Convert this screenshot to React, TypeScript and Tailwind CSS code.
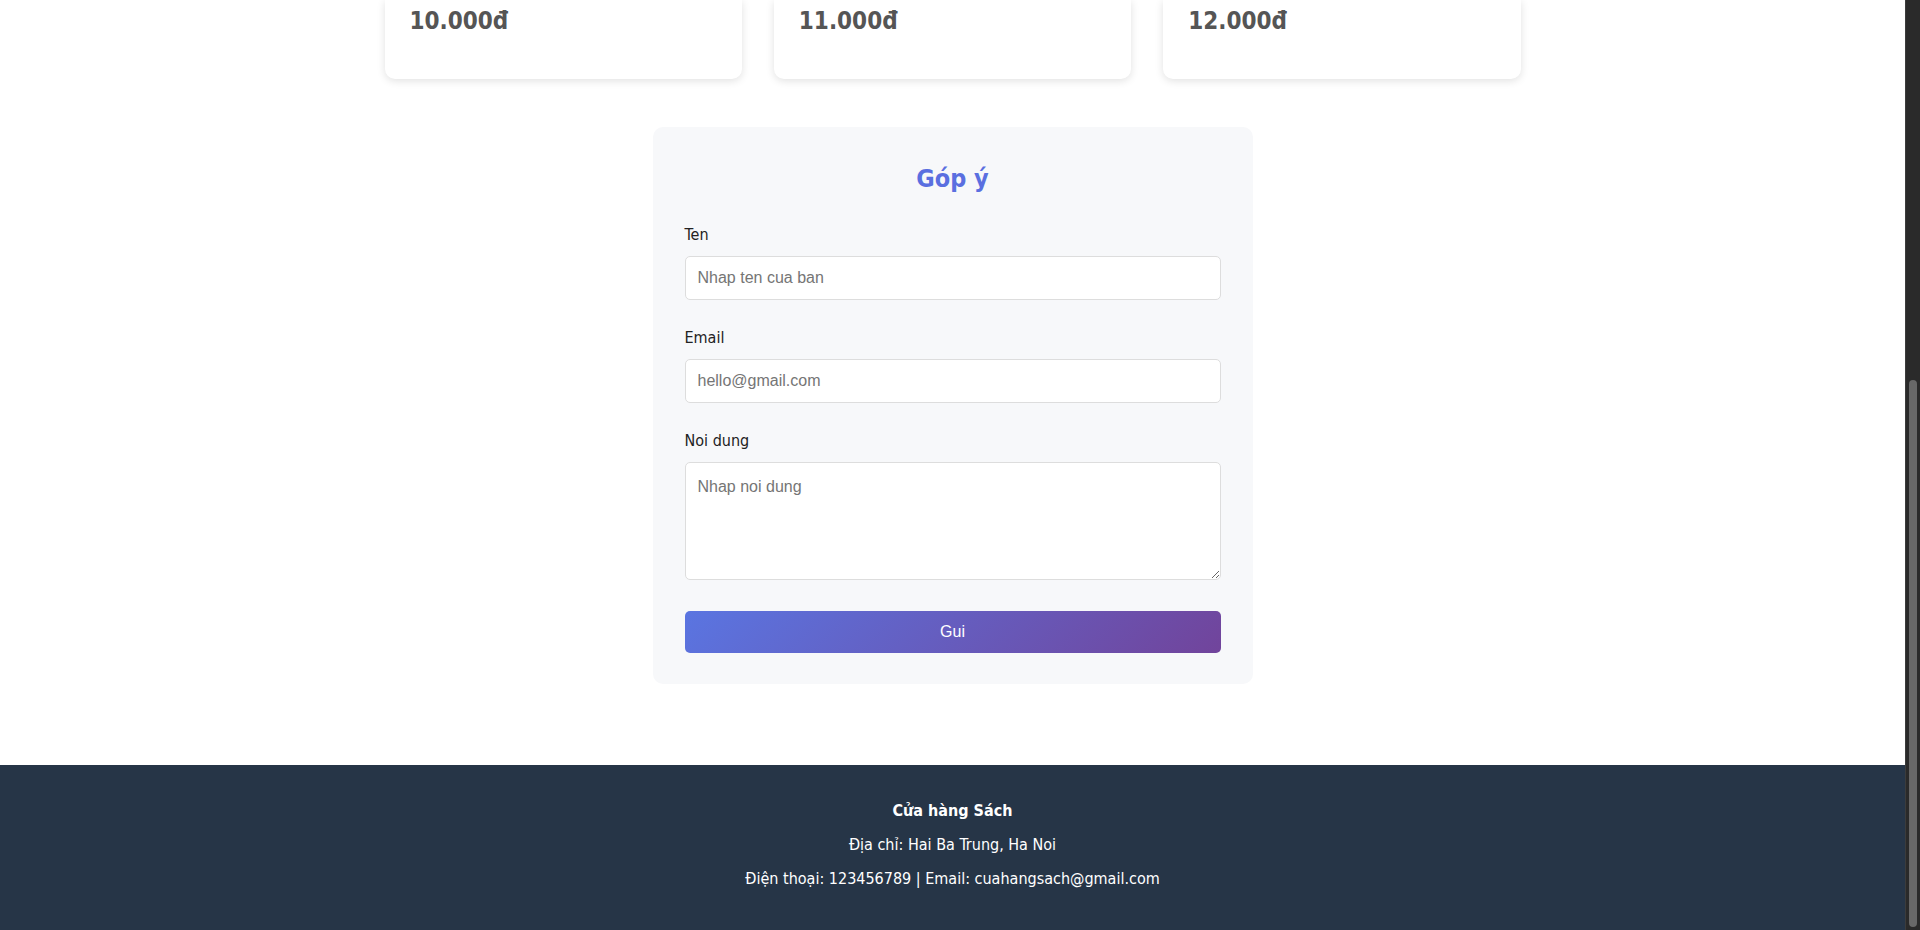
import React from 'react';

const prices = ['10.000đ', '11.000đ', '12.000đ'];

const PriceCard: React.FC<{ price: string }> = ({ price }) => (
    <div className="bg-white rounded-b-[10px] shadow-[0_2px_8px_rgba(0,0,0,0.12)] pt-[7px] pb-[44px] px-[25px]">
        <p className="text-[24px] leading-[28px] font-bold text-[#555555]">{price}</p>
    </div>
);

const FeedbackForm: React.FC = () => {
    const inputCls =
        "block w-full h-[44px] px-3 border border-[#dddddd] rounded-[5px] bg-white text-[16px] text-[#333] placeholder:text-[#757575] outline-none font-['Liberation_Sans',Arial,sans-serif]";
    const labelCls = 'block text-[16px] leading-[20px] text-[#222] mb-[11px]';

    return (
        <section className="w-[600px] mx-auto mt-[48px] mb-[81px] bg-[#f7f8fa] rounded-[10px] px-8 pt-8 pb-[31px]">
            <h2 className="text-center text-[25px] leading-[40px] font-bold text-[#5a6fe0] mb-[26px]">Góp ý</h2>

            <form onSubmit={(e) => e.preventDefault()}>
                <div>
                    <label className={labelCls}>Ten</label>
                    <input type="text" placeholder="Nhap ten cua ban" className={inputCls} />
                </div>

                <div className="mt-[28px]">
                    <label className={labelCls}>Email</label>
                    <input type="email" placeholder="hello@gmail.com" className={inputCls} />
                </div>

                <div className="mt-[28px]">
                    <label className={labelCls}>Noi dung</label>
                    <textarea
                        rows={5}
                        placeholder="Nhap noi dung"
                        className="block w-full h-[118px] p-3 border border-[#dddddd] rounded-[5px] bg-white text-[16px] text-[#333] placeholder:text-[#757575] outline-none font-['Liberation_Sans',Arial,sans-serif]"
                    />
                </div>

                <button
                    type="submit"
                    className="mt-[31px] block w-full h-[42px] rounded-[5px] text-white text-[16px] bg-[linear-gradient(135deg,#5a75e1_0%,#71449b_100%)] font-['Liberation_Sans',Arial,sans-serif]"
                >
                    Gui
                </button>
            </form>
        </section>
    );
};

const Footer: React.FC = () => (
    <footer className="flex-1 bg-[#263547] text-white text-center text-[16px] leading-[20px] pt-[36px] flex flex-col gap-[14px]">
        <p className="font-bold">Cửa hàng Sách</p>
        <p>Địa chỉ: Hai Ba Trung, Ha Noi</p>
        <p>Điện thoại: 123456789 | Email: cuahangsach@gmail.com</p>
    </footer>
);

export default function App() {
    return (
        <div className="h-[930px] flex overflow-hidden font-['DejaVu_Sans_Condensed','DejaVu_Sans',sans-serif]">
            <main className="flex-1 flex flex-col bg-white">
                <div className="w-[1136px] mx-auto grid grid-cols-3 gap-8">
                    {prices.map((p) => (
                        <PriceCard key={p} price={p} />
                    ))}
                </div>

                <FeedbackForm />

                <Footer />
            </main>

            {/* scrollbar strip */}
            <div className="w-[15px] bg-[#2a2a2a] border-l border-[#3c3c3c] flex flex-col pt-[380px] pb-[3px] px-[3px]">
                <div className="flex-1 rounded-full bg-[#686868]" />
            </div>
        </div>
    );
}
